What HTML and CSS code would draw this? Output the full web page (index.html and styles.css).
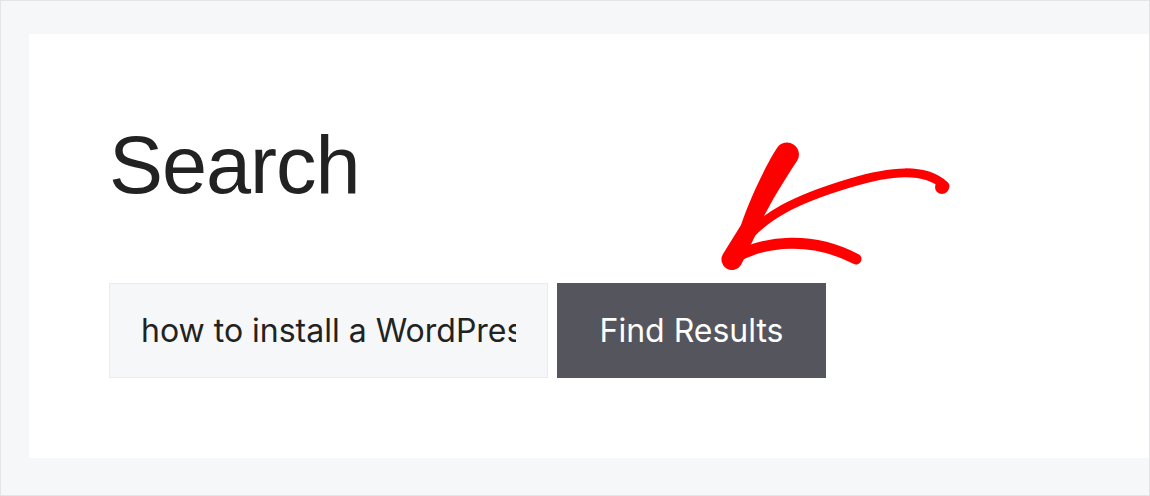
FILE: index.html
```html
<!DOCTYPE html>
<html lang="en">
<head>
<meta charset="utf-8">
<title>Search</title>
<link rel="stylesheet" href="styles.css">
</head>
<body>
<div class="frame">
  <main class="panel">
    <h1 class="title">Search</h1>
    <form class="search-form" onsubmit="return false">
      <input class="search-input" type="text" value="how to install a WordPress plugin">
      <button class="search-button" type="submit">Find Results</button>
    </form>
  </main>
  <svg class="arrow" width="1150" height="496" viewBox="0 0 1150 496" aria-hidden="true">
    <path class="arrow-fill" d="M 777,148 C 769,160 751,195 741,225 L 723,254 A 9 9 0 0 0 741,265 L 755,236 C 763,215 781,185 797,161 A 10.5 10.5 0 0 0 777,148 Z"/>
    <path class="arrow-line thin" d="M 738,250 C 760,215 800,198 850,183 C 890,171 925,167 945,186"/>
    <circle class="arrow-fill" cx="942" cy="187" r="7"/>
    <path class="arrow-line thick" d="M 732,259 C 765,240 812,236 856,259"/>
  </svg>
</div>
</body>
</html>
```

FILE: styles.css
```css
* {
  box-sizing: border-box;
}

html, body {
  margin: 0;
  padding: 0;
  background: #ffffff;
}

.frame {
  position: relative;
  width: 1150px;
  height: 496px;
  border: 1px solid #e2e4e8;
  background: #f6f7f9;
  padding: 33px 0 37px 28px;
  font-family: "Liberation Sans", Arial, Helvetica, sans-serif;
  overflow: hidden;
}

.panel {
  background: #ffffff;
  height: 100%;
  padding: 91px 0 0 80px;
}

.title {
  margin: 0;
  font-size: 81px;
  line-height: 81px;
  font-weight: 400;
  letter-spacing: -1px;
  color: #222222;
}

.search-form {
  display: flex;
  gap: 9px;
  margin-top: 77px;
}

.search-input {
  width: 439px;
  height: 95px;
  border: 1px solid #ebebeb;
  background: #f6f7f9;
  padding: 0 31px 0 31px;
  font-family: Inter, "Liberation Sans", sans-serif;
  font-size: 32px;
  color: #222222;
  outline: none;
  border-radius: 0;
}

.search-button {
  width: 269px;
  height: 95px;
  border: none;
  background: #55555e;
  color: #ffffff;
  font-family: Inter, "Liberation Sans", sans-serif;
  font-size: 32px;
  padding: 0;
  border-radius: 0;
  cursor: pointer;
}

.arrow {
  position: absolute;
  left: -1px;
  top: -1px;
  pointer-events: none;
}

.arrow-fill {
  fill: #ff0000;
}

.arrow-line {
  fill: none;
  stroke: #ff0000;
  stroke-linecap: round;
  stroke-linejoin: round;
}

.arrow-line.thin {
  stroke-width: 9;
}

.arrow-line.thick {
  stroke-width: 11;
}
```
